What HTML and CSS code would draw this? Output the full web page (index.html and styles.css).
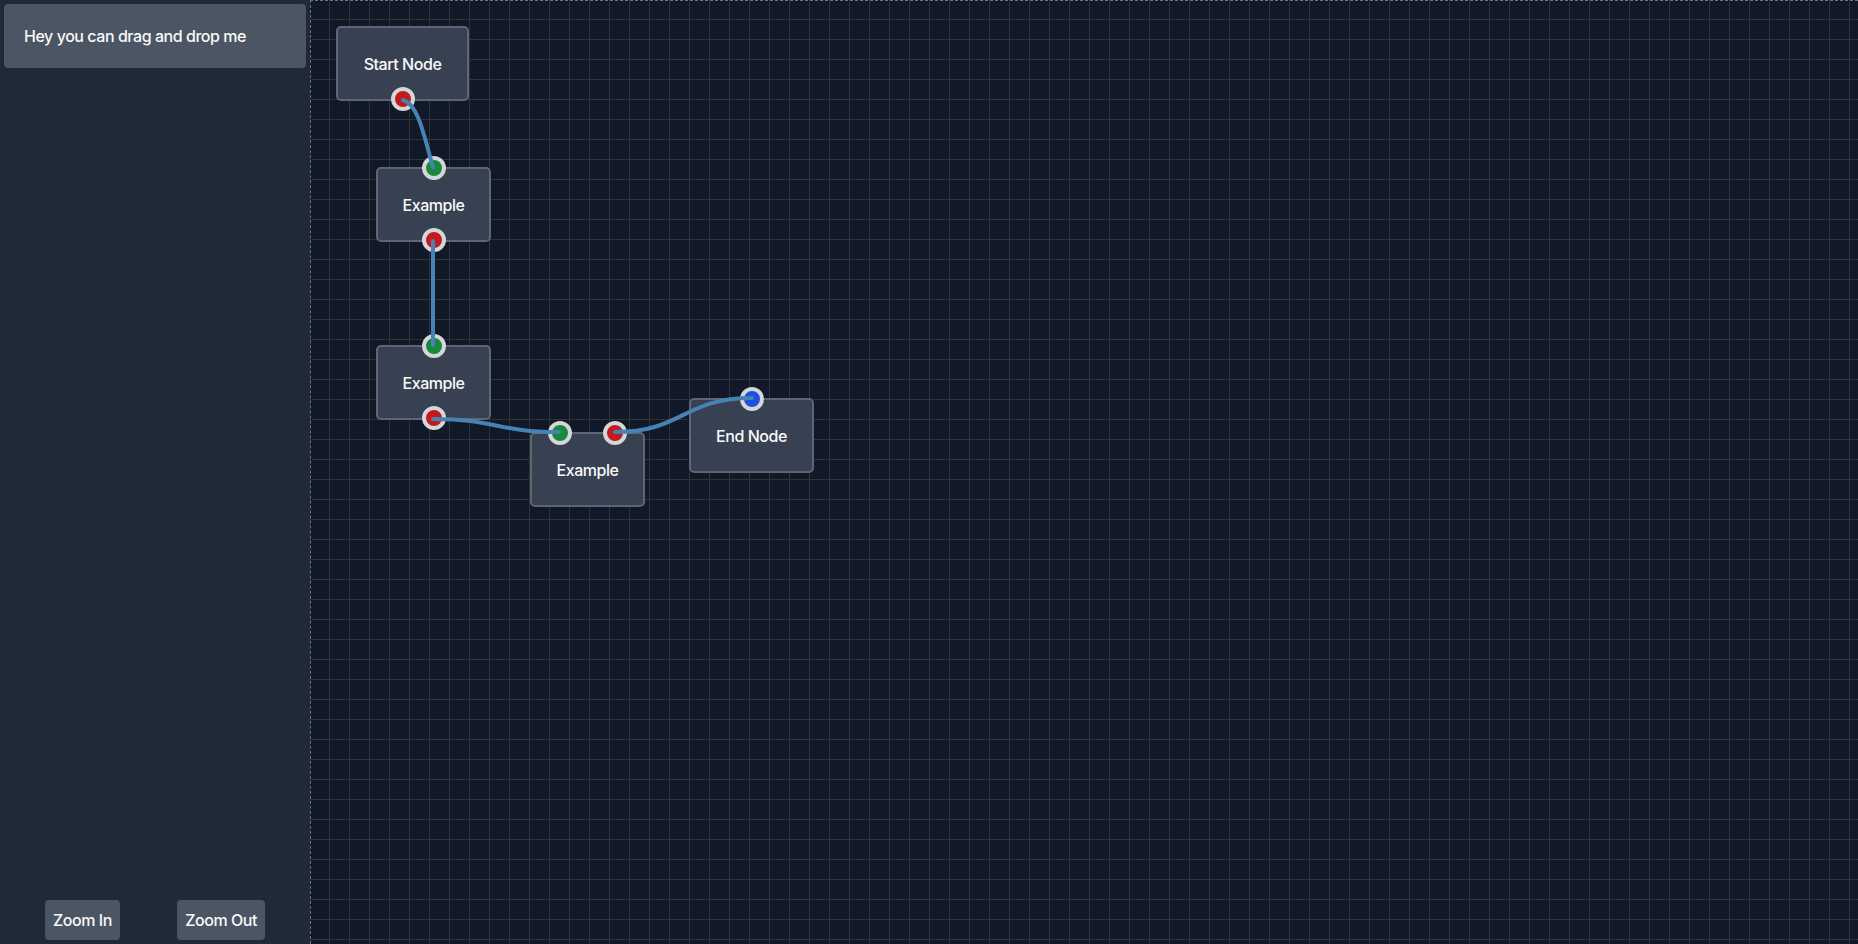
FILE: index.html
```html
<!DOCTYPE html>
<html lang="en">
<head>
<meta charset="utf-8">
<title>Flow editor</title>
<link rel="stylesheet" href="styles.css">
</head>
<body>
<div class="app">
  <aside class="sidebar">
    <div class="drag-card" draggable="true">Hey you can drag and drop me</div>
    <div class="zoom-bar">
      <button class="btn">Zoom In</button>
      <button class="btn">Zoom Out</button>
    </div>
  </aside>
  <main class="canvas">
    <div class="node node-start">Start Node
      <span class="handle handle-source handle-bottom"></span>
    </div>
    <div class="node node-ex1">Example
      <span class="handle handle-target handle-top"></span>
      <span class="handle handle-source handle-bottom"></span>
    </div>
    <div class="node node-ex2">Example
      <span class="handle handle-target handle-top"></span>
      <span class="handle handle-source handle-bottom"></span>
    </div>
    <div class="node node-ex3">Example
      <span class="handle handle-target handle-top-left"></span>
      <span class="handle handle-source handle-top-right"></span>
    </div>
    <div class="node node-end">End Node
      <span class="handle handle-end handle-top"></span>
    </div>
    <svg class="edges" width="1547" height="943" viewBox="0 0 1547 943">
      <path d="M92,99 C108,103 114,140 122,166"/>
      <path d="M122,240 L122,344"/>
      <path d="M122,418 C185,418 185,431 248,431"/>
      <path d="M304,431 C372,431 372,397 441,397"/>
    </svg>
  </main>
</div>
</body>
</html>
```

FILE: styles.css
```css
* { box-sizing: border-box; }
html, body {
  margin: 0;
  padding: 0;
  height: 100%;
}
body {
  font-family: Inter, "Liberation Sans", Arial, sans-serif;
  font-size: 16px;
  font-weight: 500;
  line-height: 24px;
  letter-spacing: -0.45px;
  color: #f9fafb;
  background: #111827;
}
.app {
  display: flex;
  height: 100vh;
}
.sidebar {
  width: 310px;
  flex: none;
  background: #1f2937;
  display: flex;
  flex-direction: column;
  justify-content: space-between;
  padding: 4px;
}
.drag-card {
  background: #4b5563;
  border-radius: 4px;
  padding: 20px 20px;
  cursor: grab;
}
.zoom-bar {
  display: flex;
  justify-content: space-between;
  padding: 0 41px;
}
.btn {
  font: inherit;
  letter-spacing: inherit;
  color: #f9fafb;
  background: #4b5563;
  border: none;
  border-radius: 4px;
  padding: 8px 8px;
  height: 40px;
}
.canvas {
  flex: 1;
  position: relative;
  overflow: hidden;
  border-left: 1px dashed #6b7280;
  border-top: 1px dashed #6b7280;
  background-color: #111827;
  background-image:
    linear-gradient(to right, #333333 0, #333333 1px, transparent 1px),
    linear-gradient(to bottom, #333333 0, #333333 1px, transparent 1px);
  background-size: 20px 20px;
  background-origin: border-box;
  background-position: -1px -1px;
}
.node {
  position: absolute;
  height: 75px;
  background: #374151;
  border: 2px solid #5d6674;
  border-radius: 5px;
  display: flex;
  align-items: center;
  justify-content: center;
  white-space: nowrap;
}
.node-start { left: 25px; top: 25px; width: 133px; }
.node-ex1 { left: 65px; top: 166px; width: 115px; }
.node-ex2 { left: 65px; top: 344px; width: 115px; }
.node-ex3 { left: 219px; top: 431px; width: 115px; }
.node-end { left: 378px; top: 397px; width: 125px; }

.handle {
  position: absolute;
  width: 24px;
  height: 24px;
  border-radius: 50%;
  border: 4px solid #d4d6da;
  transform: translate(-50%, -50%);
}
.handle-source { background: #c21b1e; }
.handle-target { background: #178a3c; }
.handle-end { background: #1f4fe0; }
.handle-top { left: 50%; top: -1px; }
.handle-bottom { left: 50%; top: 100%; }
.handle-top-left { left: 25%; top: -1px; }
.handle-top-right { left: 75%; top: -1px; }

.edges {
  position: absolute;
  left: 0;
  top: 0;
  pointer-events: none;
  overflow: visible;
}
.edges path {
  fill: none;
  stroke: #4682b4;
  stroke-width: 4;
  stroke-linecap: round;
}
```
